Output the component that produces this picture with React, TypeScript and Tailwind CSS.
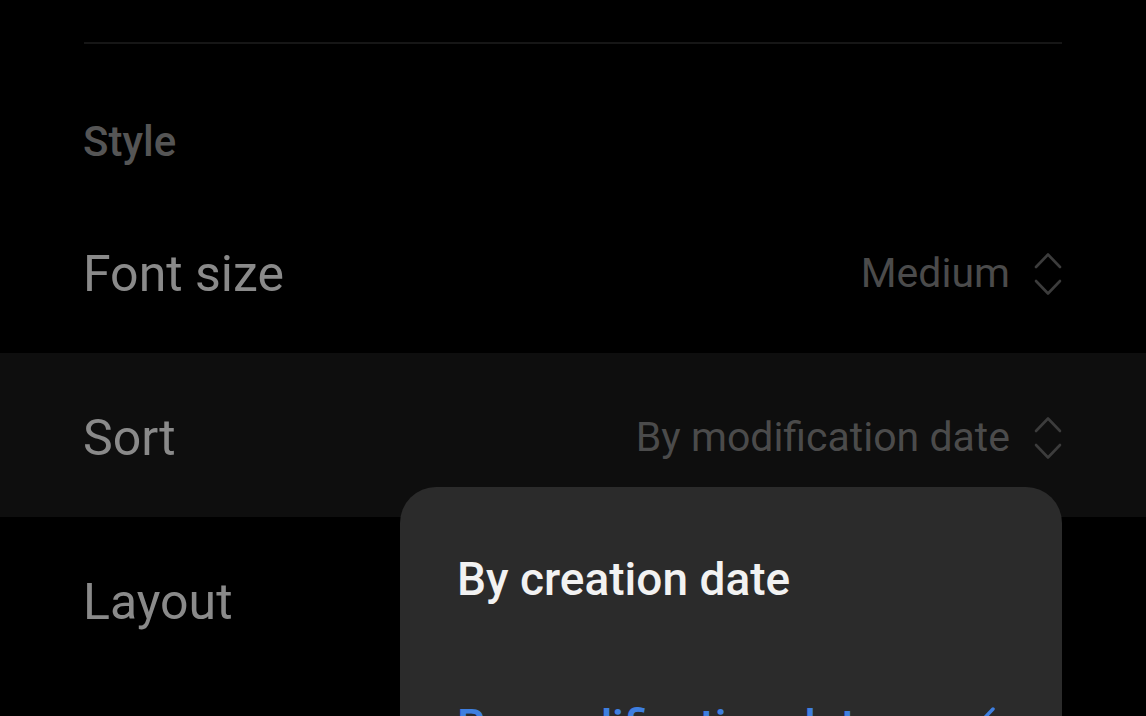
import React from "react";

const font = { fontFamily: "Roboto, 'Noto Sans', sans-serif" };

function Chevrons() {
  return (
    <svg width="30" height="44" viewBox="0 0 30 44" fill="none" className="shrink-0">
      <path d="M3 15 L15 2.5 L27 15" stroke="#3c3c3c" strokeWidth="2.6" strokeLinecap="round" strokeLinejoin="round" />
      <path d="M3 29 L15 41.5 L27 29" stroke="#3c3c3c" strokeWidth="2.6" strokeLinecap="round" strokeLinejoin="round" />
    </svg>
  );
}

function SettingRow({ label, value, active }: { label: string; value?: string; active?: boolean }) {
  return (
    <div className={`flex h-[164px] items-center justify-between px-[83px] pt-[5px] ${active ? "bg-[#0e0e0e]" : ""}`}>
      <span className="text-[50px] leading-none text-[#8a8a8a]">{label}</span>
      {value && (
        <div className="flex items-center gap-[23px]">
          <span className="text-[41px] leading-none text-[#4b4b4b]">{value}</span>
          <Chevrons />
        </div>
      )}
    </div>
  );
}

export default function App() {
  return (
    <div className="relative h-[716px] w-[1146px] overflow-hidden bg-black" style={font}>
      <div className="pt-[42px]">
        <div className="mx-[84px] h-[2px] bg-[#161616]" />
      </div>
      <div className="px-[83px] pt-[77px] pb-[26px]">
        <span className="text-[42px] font-medium leading-none text-[#555555]">Style</span>
      </div>
      <SettingRow label="Font size" value="Medium" />
      <SettingRow label="Sort" value="By modification date" active />
      <SettingRow label="Layout" />

      <div className="absolute left-[400px] top-[487px] h-[400px] w-[662px] rounded-[36px] bg-[#2b2b2b] pt-[20px]">
        <div className="flex h-[144px] items-center px-[57px]">
          <span className="text-[46px] font-medium leading-none text-[#f2f2f2]">By creation date</span>
        </div>
        <div className="flex h-[144px] items-center justify-between pl-[57px] pr-[66px] pt-[6px]">
          <span className="text-[46px] font-medium leading-none text-[#3e7fe0]">By modification date</span>
          <svg width="34" height="28" viewBox="0 0 34 28" fill="none" className="mt-[48px] self-start">
            <path d="M3 15 L12 24 L31 4" stroke="#3e7fe0" strokeWidth="3.5" strokeLinecap="round" strokeLinejoin="round" />
          </svg>
        </div>
      </div>
    </div>
  );
}
